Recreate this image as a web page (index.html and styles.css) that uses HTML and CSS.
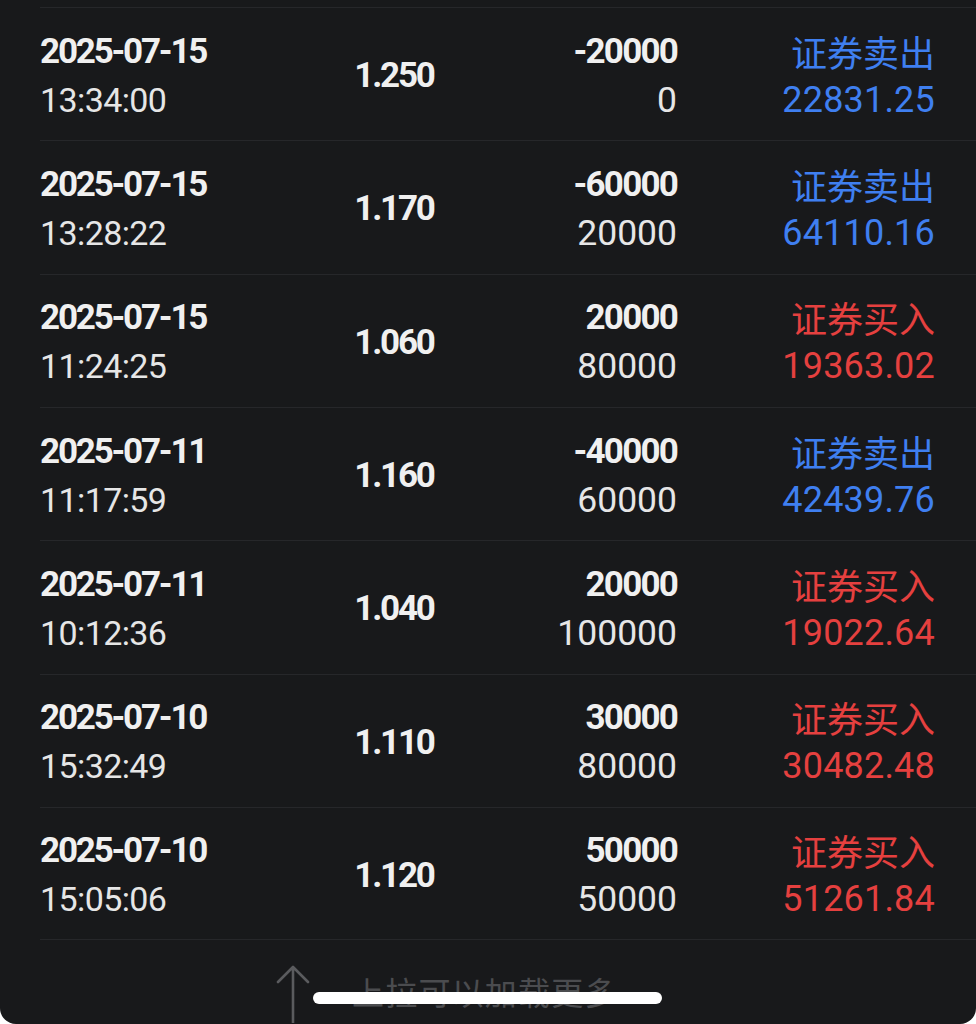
FILE: index.html
```html
<!DOCTYPE html>
<html lang="zh-CN">
<head>
<meta charset="utf-8">
<title>成交记录</title>
<link rel="stylesheet" href="styles.css">
</head>
<body>
<div class="screen">
  <div class="list">
    <div class="row">
      <div class="cell left"><div class="strong">2025-07-15</div><div class="light">13:34:00</div></div>
      <div class="cell price strong">1.250</div>
      <div class="cell right"><div class="strong">-20000</div><div class="light">0</div></div>
      <div class="cell right sell"><div class="cjk">证券卖出</div><div class="amount">22831.25</div></div>
    </div>
    <div class="row">
      <div class="cell left"><div class="strong">2025-07-15</div><div class="light">13:28:22</div></div>
      <div class="cell price strong">1.170</div>
      <div class="cell right"><div class="strong">-60000</div><div class="light">20000</div></div>
      <div class="cell right sell"><div class="cjk">证券卖出</div><div class="amount">64110.16</div></div>
    </div>
    <div class="row">
      <div class="cell left"><div class="strong">2025-07-15</div><div class="light">11:24:25</div></div>
      <div class="cell price strong">1.060</div>
      <div class="cell right"><div class="strong">20000</div><div class="light">80000</div></div>
      <div class="cell right buy"><div class="cjk">证券买入</div><div class="amount">19363.02</div></div>
    </div>
    <div class="row">
      <div class="cell left"><div class="strong">2025-07-11</div><div class="light">11:17:59</div></div>
      <div class="cell price strong">1.160</div>
      <div class="cell right"><div class="strong">-40000</div><div class="light">60000</div></div>
      <div class="cell right sell"><div class="cjk">证券卖出</div><div class="amount">42439.76</div></div>
    </div>
    <div class="row">
      <div class="cell left"><div class="strong">2025-07-11</div><div class="light">10:12:36</div></div>
      <div class="cell price strong">1.040</div>
      <div class="cell right"><div class="strong">20000</div><div class="light">100000</div></div>
      <div class="cell right buy"><div class="cjk">证券买入</div><div class="amount">19022.64</div></div>
    </div>
    <div class="row">
      <div class="cell left"><div class="strong">2025-07-10</div><div class="light">15:32:49</div></div>
      <div class="cell price strong">1.110</div>
      <div class="cell right"><div class="strong">30000</div><div class="light">80000</div></div>
      <div class="cell right buy"><div class="cjk">证券买入</div><div class="amount">30482.48</div></div>
    </div>
    <div class="row last">
      <div class="cell left"><div class="strong">2025-07-10</div><div class="light">15:05:06</div></div>
      <div class="cell price strong">1.120</div>
      <div class="cell right"><div class="strong">50000</div><div class="light">50000</div></div>
      <div class="cell right buy"><div class="cjk">证券买入</div><div class="amount">51261.84</div></div>
    </div>
  </div>
  <div class="footer">
    <svg class="arrow" width="34" height="58" viewBox="0 0 34 58" aria-hidden="true">
      <path d="M17 2 V58 M2 17 L17 2 L32 17" fill="none" stroke="#5a5b5e" stroke-width="2.6" stroke-linecap="round" stroke-linejoin="round"/>
    </svg>
    <span class="hint">上拉可以加载更多</span>
  </div>
  <div class="home-indicator"></div>
</div>
</body>
</html>
```

FILE: styles.css
```css
html, body {
  margin: 0;
  padding: 0;
  background: #ffffff;
}

.screen {
  position: relative;
  width: 976px;
  height: 1024px;
  background: #18191b;
  border-radius: 0 0 16px 16px;
  overflow: hidden;
  font-family: Roboto, "Noto Sans", "Noto Sans CJK SC", sans-serif;
  color: #ececec;
}

.list {
  padding-top: 7px;
}

.row {
  margin-left: 40px;
  padding-right: 41px;
  height: 133.33px;
  box-sizing: border-box;
  border-top: 1px solid #26272a;
  display: grid;
  grid-template-columns: 270px 170px 197px 258px;
  align-items: center;
}

.row.last {
  border-bottom: 1px solid #26272a;
}

.cell {
  font-size: 35px;
  line-height: 49px;
  white-space: nowrap;
  padding-top: 3px;
}

.cell > div {
  height: 49px;
}

.left {
  text-align: left;
}

.right {
  text-align: right;
}

.price {
  text-align: center;
  letter-spacing: -2.4px;
  padding-right: 2px;
}

.strong {
  font-weight: 700;
  letter-spacing: -2.2px;
  color: #f0f0f0;
}

.right .strong {
  letter-spacing: -1.8px;
}

.light {
  font-size: 34px;
  font-weight: 400;
  letter-spacing: -0.6px;
  color: #e6e6e6;
}

.right .light {
  font-size: 35.5px;
  letter-spacing: 0;
}

.cjk {
  font-family: "Noto Sans CJK SC", sans-serif;
  font-size: 36px;
  letter-spacing: 0;
}

.amount {
  font-size: 36px;
  letter-spacing: 0.2px;
}

.sell {
  color: #3f7ff0;
}

.buy {
  color: #e5403f;
}

.footer {
  height: 83px;
  display: flex;
  align-items: flex-start;
  padding-left: 276px;
  box-sizing: border-box;
}

.arrow {
  display: block;
  margin-top: 25px;
  flex: none;
}

.hint {
  margin-left: 42px;
  margin-top: 31px;
  font-family: "Noto Sans CJK SC", sans-serif;
  font-size: 32px;
  line-height: 40px;
  letter-spacing: 1.2px;
  color: #4b4c4f;
}

.home-indicator {
  position: absolute;
  left: 313px;
  top: 992px;
  width: 349px;
  height: 12px;
  border-radius: 6px;
  background: #ffffff;
}
```
